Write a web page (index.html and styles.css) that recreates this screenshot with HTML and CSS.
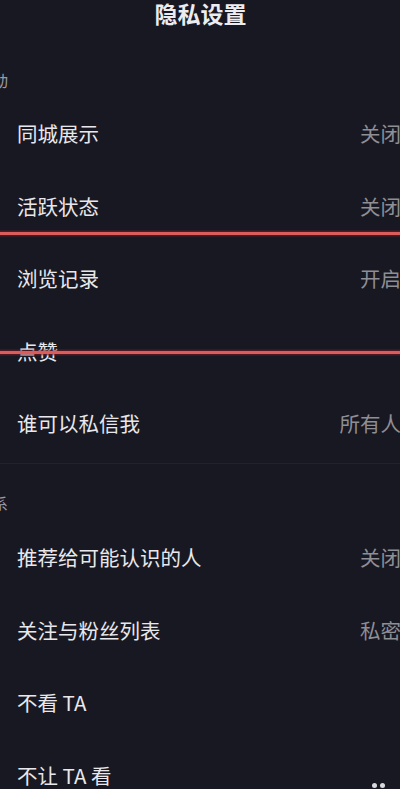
FILE: index.html
```html
<!DOCTYPE html>
<html lang="zh-CN">
<head>
<meta charset="utf-8">
<title>隐私设置</title>
<link rel="stylesheet" href="styles.css">
</head>
<body>
<div class="page">
  <header class="header">隐私设置</header>

  <div class="section-label">互动</div>
  <div class="row"><span class="name">同城展示</span><span class="value">关闭</span></div>
  <div class="row"><span class="name">活跃状态</span><span class="value">关闭</span></div>
  <div class="row"><span class="name">浏览记录</span><span class="value">开启</span></div>
  <div class="row"><span class="name">点赞</span><span class="value"></span></div>
  <div class="row"><span class="name">谁可以私信我</span><span class="value">所有人</span></div>

  <div class="divider"></div>

  <div class="section-label second">关系</div>
  <div class="row"><span class="name">推荐给可能认识的人</span><span class="value">关闭</span></div>
  <div class="row"><span class="name">关注与粉丝列表</span><span class="value">私密</span></div>
  <div class="row"><span class="name">不看 TA</span><span class="value"></span></div>
  <div class="row"><span class="name">不让 TA 看</span><span class="value"></span></div>

  <div class="mark mark-1"></div>
  <div class="mark mark-2"></div>
  <div class="corner-dots"><span></span><span></span></div>
</div>
</body>
</html>
```

FILE: styles.css
```css
html, body {
  margin: 0;
  padding: 0;
  background: #181822;
}

body {
  width: 400px;
  height: 789px;
  overflow: hidden;
  font-family: "Noto Sans CJK SC", "Noto Sans", sans-serif;
}

.page {
  position: relative;
  width: 400px;
  height: 789px;
  overflow: hidden;
  background: #181822;
}

.header {
  height: 28px;
  line-height: 26px;
  text-align: center;
  font-size: 23px;
  font-weight: 700;
  color: #ececf0;
  padding-left: 1px;
}

.section-label {
  margin-left: -24px;
  padding-top: 41px;
  padding-bottom: 6px;
  height: 22px;
  line-height: 22px;
  font-size: 16px;
  color: #9a9aa2;
}

.section-label.second {
  padding-top: 28.5px;
  padding-bottom: 6.75px;
}

.row {
  height: 72.5px;
  display: flex;
  align-items: center;
  justify-content: space-between;
  padding-left: 17px;
  padding-right: 0;
}

.name {
  font-size: 20.5px;
  color: #e8e8ec;
  line-height: 28px;
}

.value {
  font-size: 20.5px;
  color: #8e8e95;
  line-height: 28px;
  margin-right: -1px;
}

.divider {
  margin-top: 3px;
  height: 1px;
  background: #22222c;
}

.mark {
  position: absolute;
  left: 0;
  right: 0;
  height: 3px;
  background: #dc5b5b;
  box-shadow: 0 0 0 1.5px rgba(120, 30, 40, 0.55);
}

.mark-1 { top: 232px; }
.mark-2 { top: 351px; }

.corner-dots {
  position: absolute;
  left: 372px;
  top: 783px;
  display: flex;
  gap: 3px;
}

.corner-dots span {
  width: 5px;
  height: 5px;
  border-radius: 50%;
  background: #d8d8dc;
}
```
